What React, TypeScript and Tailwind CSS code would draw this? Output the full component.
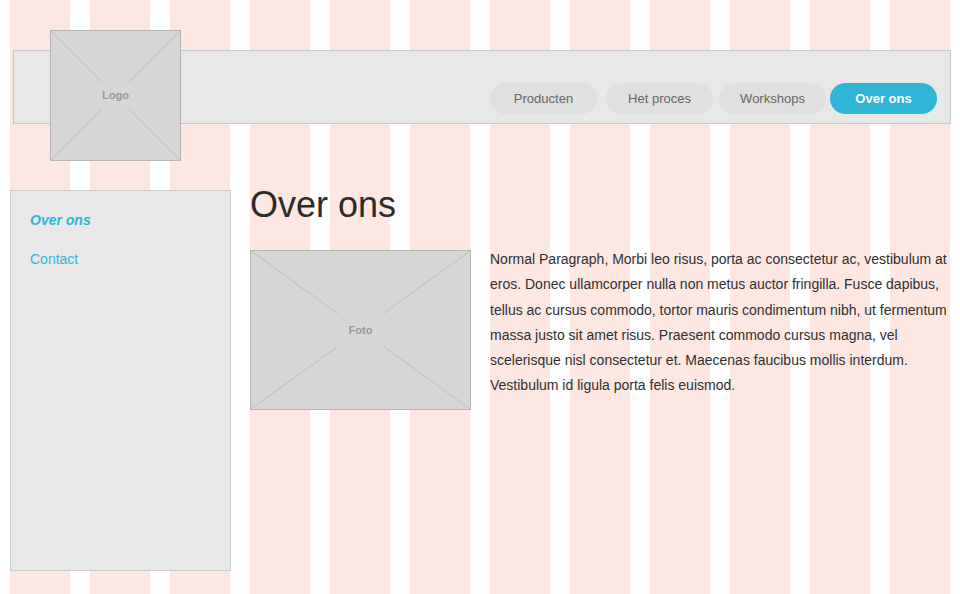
import React from 'react';

const navItems = [
  { name: 'Producten', active: false, ml: '' },
  { name: 'Het proces', active: false, ml: 'ml-[9px]' },
  { name: 'Workshops', active: false, ml: 'ml-[6px]' },
  { name: 'Over ons', active: true, ml: 'ml-[4px]' },
];

function Placeholder({ w, h, label }: { w: number; h: number; label: string }) {
  // diagonals stop short of the centre, leaving room for the label
  const cx = w / 2;
  const cy = h / 2;
  const f = 0.79;
  return (
    <div className="relative box-border h-full w-full border border-[#b5b5b5] bg-[#d6d6d6]">
      <svg className="absolute inset-0 h-full w-full" viewBox={`0 0 ${w} ${h}`} preserveAspectRatio="none">
        <g stroke="#bdbdbd" strokeWidth="1">
          <line x1="0" y1="0" x2={cx * f} y2={cy * f} />
          <line x1={w} y1="0" x2={w - cx * f} y2={cy * f} />
          <line x1="0" y1={h} x2={cx * f} y2={h - cy * f} />
          <line x1={w} y1={h} x2={w - cx * f} y2={h - cy * f} />
        </g>
      </svg>
      <div className="absolute inset-0 flex items-center justify-center text-[11px] font-bold text-[#9a9a9a]">
        {label}
      </div>
    </div>
  );
}

export default function App() {
  return (
    <div
      className="relative h-[594px] w-[960px] overflow-hidden bg-white text-[#333]"
      style={{ fontFamily: '"Liberation Sans", Arial, sans-serif' }}
    >
      {/* Grid overlay */}
      <div className="absolute inset-0 grid grid-cols-12 gap-[20px] pl-[10px] pr-[10px]">
        {Array.from({ length: 12 }).map((_, i) => (
          <div key={i} className="h-full bg-[#fde7e2]" />
        ))}
      </div>

      <div className="relative pt-[50px]">
        {/* Header */}
        <header className="ml-[13px] box-border flex h-[74px] w-[938px] items-start justify-end border border-[#c9c9c9] bg-[#e8e8e8] pr-[13px] pt-[32px]">
          <nav className="flex">
            {navItems.map((item) => (
              <button
                key={item.name}
                className={`${item.ml} h-[31px] w-[107px] rounded-full text-[13px] ${
                  item.active ? 'bg-[#30b5d7] font-bold text-white' : 'bg-[#e0e0e0] text-[#666]'
                }`}
              >
                {item.name}
              </button>
            ))}
          </nav>
        </header>

        {/* Logo */}
        <div className="absolute left-[50px] top-[30px] h-[131px] w-[131px]">
          <Placeholder w={131} h={131} label="Logo" />
        </div>

        {/* Body */}
        <div className="ml-[10px] mt-[66px] flex items-start">
          <aside className="box-border flex h-[381px] w-[221px] flex-col gap-[19px] border border-[#cccccc] bg-[#e9e9e9] px-[19px] pt-[19px] text-[14px] leading-[20px] text-[#30b5d7]">
            <a className="font-bold italic">Over ons</a>
            <a>Contact</a>
          </aside>

          <main className="ml-[19px] flex flex-col">
            <h1 className="-mt-[3px] text-[36px] leading-[36px] text-[#2b2b2b]">Over ons</h1>
            <div className="mt-[27px] flex items-start">
              <div className="h-[160px] w-[221px]">
                <Placeholder w={221} h={160} label="Foto" />
              </div>
              <p className="-mt-[3px] ml-[19px] w-[462px] text-[14px] leading-[25.3px] text-[#2f2f2f]">
                Normal Paragraph, Morbi leo risus, porta ac consectetur ac, vestibulum at eros. Donec ullamcorper nulla
                non metus auctor fringilla. Fusce dapibus, tellus ac cursus commodo, tortor mauris condimentum nibh, ut
                fermentum massa justo sit amet risus. Praesent commodo cursus magna, vel scelerisque nisl consectetur et.
                Maecenas faucibus mollis interdum. Vestibulum id ligula porta felis euismod.
              </p>
            </div>
          </main>
        </div>
      </div>
    </div>
  );
}
